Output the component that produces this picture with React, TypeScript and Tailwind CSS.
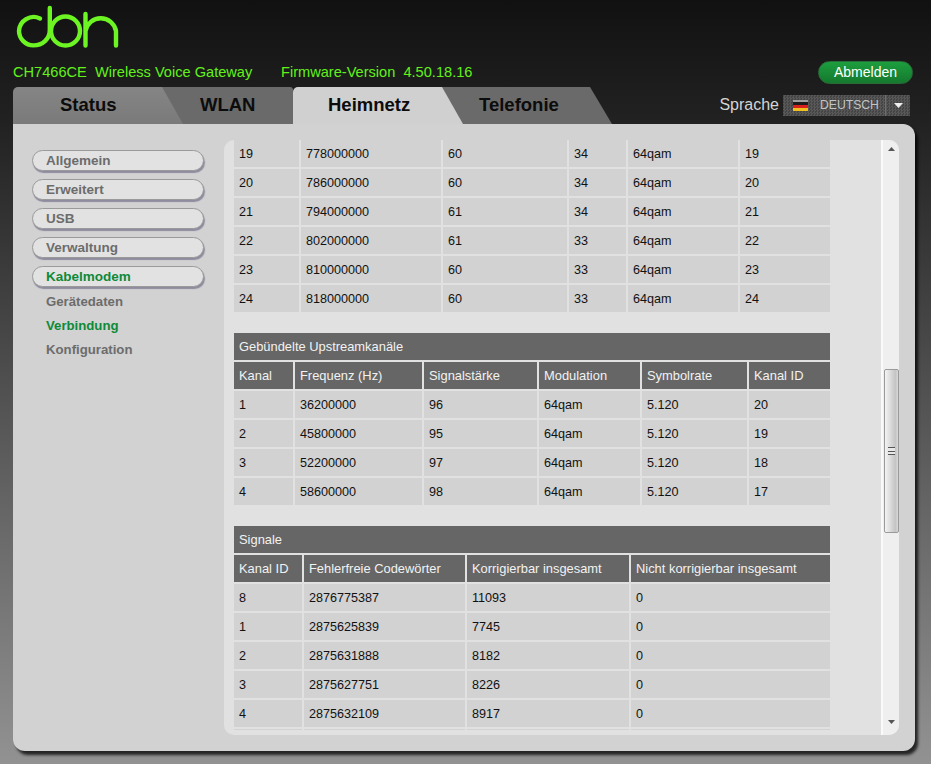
const ds1 = [
  ["19", "778000000", "60", "34", "64qam", "19"],
  ["20", "786000000", "60", "34", "64qam", "20"],
  ["21", "794000000", "61", "34", "64qam", "21"],
  ["22", "802000000", "61", "33", "64qam", "22"],
  ["23", "810000000", "60", "33", "64qam", "23"],
  ["24", "818000000", "60", "33", "64qam", "24"],
];
const us = [
  ["1", "36200000", "96", "64qam", "5.120", "20"],
  ["2", "45800000", "95", "64qam", "5.120", "19"],
  ["3", "52200000", "97", "64qam", "5.120", "18"],
  ["4", "58600000", "98", "64qam", "5.120", "17"],
];
const sig = [
  ["8", "2876775387", "11093", "0"],
  ["1", "2875625839", "7745", "0"],
  ["2", "2875631888", "8182", "0"],
  ["3", "2875627751", "8226", "0"],
  ["4", "2875632109", "8917", "0"],
  ["", "", "", ""],
];

function Cells({ row, head }: { row: string[]; head?: boolean }) {
  return (
    <>
      {row.map((c, i) => (
        <div
          key={i}
          className={
            head
              ? "h-[27px] bg-[#666666] pl-[5px] text-[12.9px] leading-[27px] text-[#f2f2f2]"
              : "h-[27px] bg-[#d2d2d2] pt-px pl-[5px] text-[12.6px] leading-[27px] text-[#111111]"
          }
        >
          {c}
        </div>
      ))}
    </>
  );
}

function Table({ cols, title, head, rows }: { cols: string; title?: string; head?: string[]; rows: string[][] }) {
  return (
    <div>
      {title && (
        <div className="mb-[2px] h-[27px] bg-[#666666] pl-[5px] text-[12.9px] leading-[27px] text-[#f2f2f2]">
          {title}
        </div>
      )}
      <div className={`grid gap-[2px] ${cols}`}>
        {head && <Cells row={head} head />}
        {rows.map((r, i) => (
          <Cells key={i} row={r} />
        ))}
      </div>
    </div>
  );
}

function SideButton({ label, active }: { label: string; active?: boolean }) {
  return (
    <div
      className={
        active
          ? "h-[21px] w-[172px] rounded-full border border-[#9a9a9a] bg-[#e2e2e2] pl-[13px] text-[13.5px] leading-[20px] font-bold text-[#0e8a38] shadow-[1px_2px_1px_#8e8c9e]"
          : "h-[21px] w-[172px] rounded-full border border-[#9a9a9a] bg-[#e2e2e2] pl-[13px] text-[13.5px] leading-[20px] font-bold text-[#6c6c6c] shadow-[1px_2px_1px_#8e8c9e]"
      }
    >
      {label}
    </div>
  );
}

export default function App() {
  return (
    <div className="h-screen w-full overflow-hidden bg-[linear-gradient(to_bottom,#111111_0px,#222222_124px,#929292_764px)] font-['Liberation_Sans',Arial,sans-serif]">
      <header>
        <div className="h-[61px]">
          <svg width="125" height="56" viewBox="0 0 125 56" fill="none" stroke="#6cf522" strokeWidth="4.4" strokeLinecap="round" strokeLinejoin="round">
            <path d="M40 18.5A14.6 14.6 0 0 0 19 31 14.6 14.6 0 0 0 33.4 45.4C42.5 45.4 49.8 39 49.8 30V8" />
            <circle cx="65.5" cy="31" r="14.5" />
            <path d="M85.5 14V45.5M85.5 31A15.5 15.5 0 0 1 116 31V45.5" />
          </svg>
        </div>
        <div className="flex h-[23px] items-center justify-between pr-[18px] pl-[13px]">
          <div className="flex text-[14.6px] whitespace-pre text-[#62f21a]">
            <span className="w-[268px]">CH7466CE  Wireless Voice Gateway</span>
            <span>Firmware-Version  4.50.18.16</span>
          </div>
          <button className="h-[23px] w-[95px] rounded-full border border-[#2a6a38] bg-[linear-gradient(to_bottom,#1c9e3e,#15782e)] text-center text-[14px] text-white">
            Abmelden
          </button>
        </div>
        <div className="mt-[3px] flex h-[37px] items-start justify-between pr-[21px] pl-[13px]">
          <nav className="flex text-[18.5px] leading-[36px] font-bold text-[#0c0c0c]">
            <div className="relative z-10 h-[37px] w-[170px] rounded-tl-[5px] bg-[linear-gradient(to_bottom,#858585,#7a7a7a)] pl-[47px] [clip-path:polygon(0_0,149px_0,170px_100%,0_100%)]">
              Status
            </div>
            <div className="-ml-[21px] h-[37px] w-[131px] rounded-tr-[3px] bg-[#6a6a6a] pl-[38px]">WLAN</div>
            <div className="relative z-10 h-[37px] w-[170px] rounded-tl-[5px] bg-[#d0d0d0] pl-[35px] [clip-path:polygon(0_0,149px_0,170px_100%,0_100%)]">
              Heimnetz
            </div>
            <div className="-ml-[21px] h-[37px] w-[170px] bg-[#6a6a6a] pl-[37px] [clip-path:polygon(0_0,148px_0,170px_100%,0_100%)]">
              Telefonie
            </div>
          </nav>
          <div className="mt-[6px] flex items-center">
            <span className="mr-[4px] text-[16px] text-[#d4d4d4]">Sprache</span>
            <div className="flex h-[21px] w-[127px] items-center bg-[#505050] bg-[repeating-conic-gradient(#585858_0%_25%,#444444_0%_50%)] bg-[length:3px_3px] text-[12.2px] text-[#c4c4c4]">
              <svg width="15" height="11" viewBox="0 0 15 11" className="mt-[1px] ml-[10px]">
                <rect width="15" height="11" fill="#a0a0a0" />
                <rect x="0" y="2" width="15" height="3" fill="#1c1c1c" />
                <rect x="0" y="5" width="15" height="3" fill="#d8201c" />
                <rect x="0" y="8" width="15" height="3" fill="#f0c020" />
              </svg>
              <span className="ml-[12px] w-[65px]">DEUTSCH</span>
              <span className="h-[21px] w-px bg-[#6e6e6e]" />
              <svg width="9" height="5" viewBox="0 0 9 5" className="ml-[8px]">
                <path d="M0 0H9L4.5 5Z" fill="#f0f0f0" />
              </svg>
            </div>
          </div>
        </div>
      </header>
      <main className="mx-[13px] flex h-[627px] w-[902px] rounded-tr-[12px] rounded-b-[12px] bg-[#d2d2d2] shadow-[3px_4px_3px_rgba(0,0,0,0.75)]">
        <aside className="w-[211px] pt-[26px] pl-[19px]">
          <div className="flex flex-col gap-[8px]">
            <SideButton label="Allgemein" />
            <SideButton label="Erweitert" />
            <SideButton label="USB" />
            <SideButton label="Verwaltung" />
            <SideButton label="Kabelmodem" active />
          </div>
          <div className="mt-[3px] flex flex-col pl-[14px] text-[13.2px] leading-[24px] font-bold text-[#6c6c6c]">
            <span>Gerätedaten</span>
            <span className="text-[#0e8a38]">Verbindung</span>
            <span>Konfiguration</span>
          </div>
        </aside>
        <section className="mt-[16px] flex h-[595px] w-[675px] overflow-hidden rounded-[10px] bg-[#e1e1e1]">
          <div className="h-[590px] w-[657px] overflow-hidden pr-[51px] pl-[10px]">
            <div className="flex flex-col gap-[21px]">
              <Table cols="grid-cols-[65px_140px_124px_57px_110px_90px]" rows={ds1} />
              <Table
                cols="grid-cols-[59px_127px_113px_101px_105px_81px]"
                title="Gebündelte Upstreamkanäle"
                head={["Kanal", "Frequenz (Hz)", "Signalstärke", "Modulation", "Symbolrate", "Kanal ID"]}
                rows={us}
              />
              <Table
                cols="grid-cols-[68px_161px_162px_199px]"
                title="Signale"
                head={["Kanal ID", "Fehlerfreie Codewörter", "Korrigierbar insgesamt", "Nicht korrigierbar insgesamt"]}
                rows={sig}
              />
            </div>
          </div>
          <div className="flex h-[595px] w-[18px] flex-col items-center border-l-2 border-white/70 bg-[#efefef]">
            <svg width="7" height="4" viewBox="0 0 7 4" className="mt-[7px]">
              <path d="M3.5 0L7 4H0Z" fill="#555555" />
            </svg>
            <div className="mt-[218px] flex h-[164px] w-[15px] items-center justify-center rounded-[2px] border border-[#9a9a9a] bg-[linear-gradient(to_right,#f4f4f4,#dcdcdc_40%,#c4c4c4_80%,#d8d8d8)]">
              <div className="flex h-[8px] w-[7px] flex-col justify-between bg-[#e8e8e8]">
                <span className="h-px bg-[#555555]" />
                <span className="h-px bg-[#555555]" />
                <span className="h-px bg-[#555555]" />
              </div>
            </div>
            <svg width="7" height="4" viewBox="0 0 7 4" className="mt-[187px]">
              <path d="M0 0H7L3.5 4Z" fill="#555555" />
            </svg>
          </div>
        </section>
      </main>
    </div>
  );
}
